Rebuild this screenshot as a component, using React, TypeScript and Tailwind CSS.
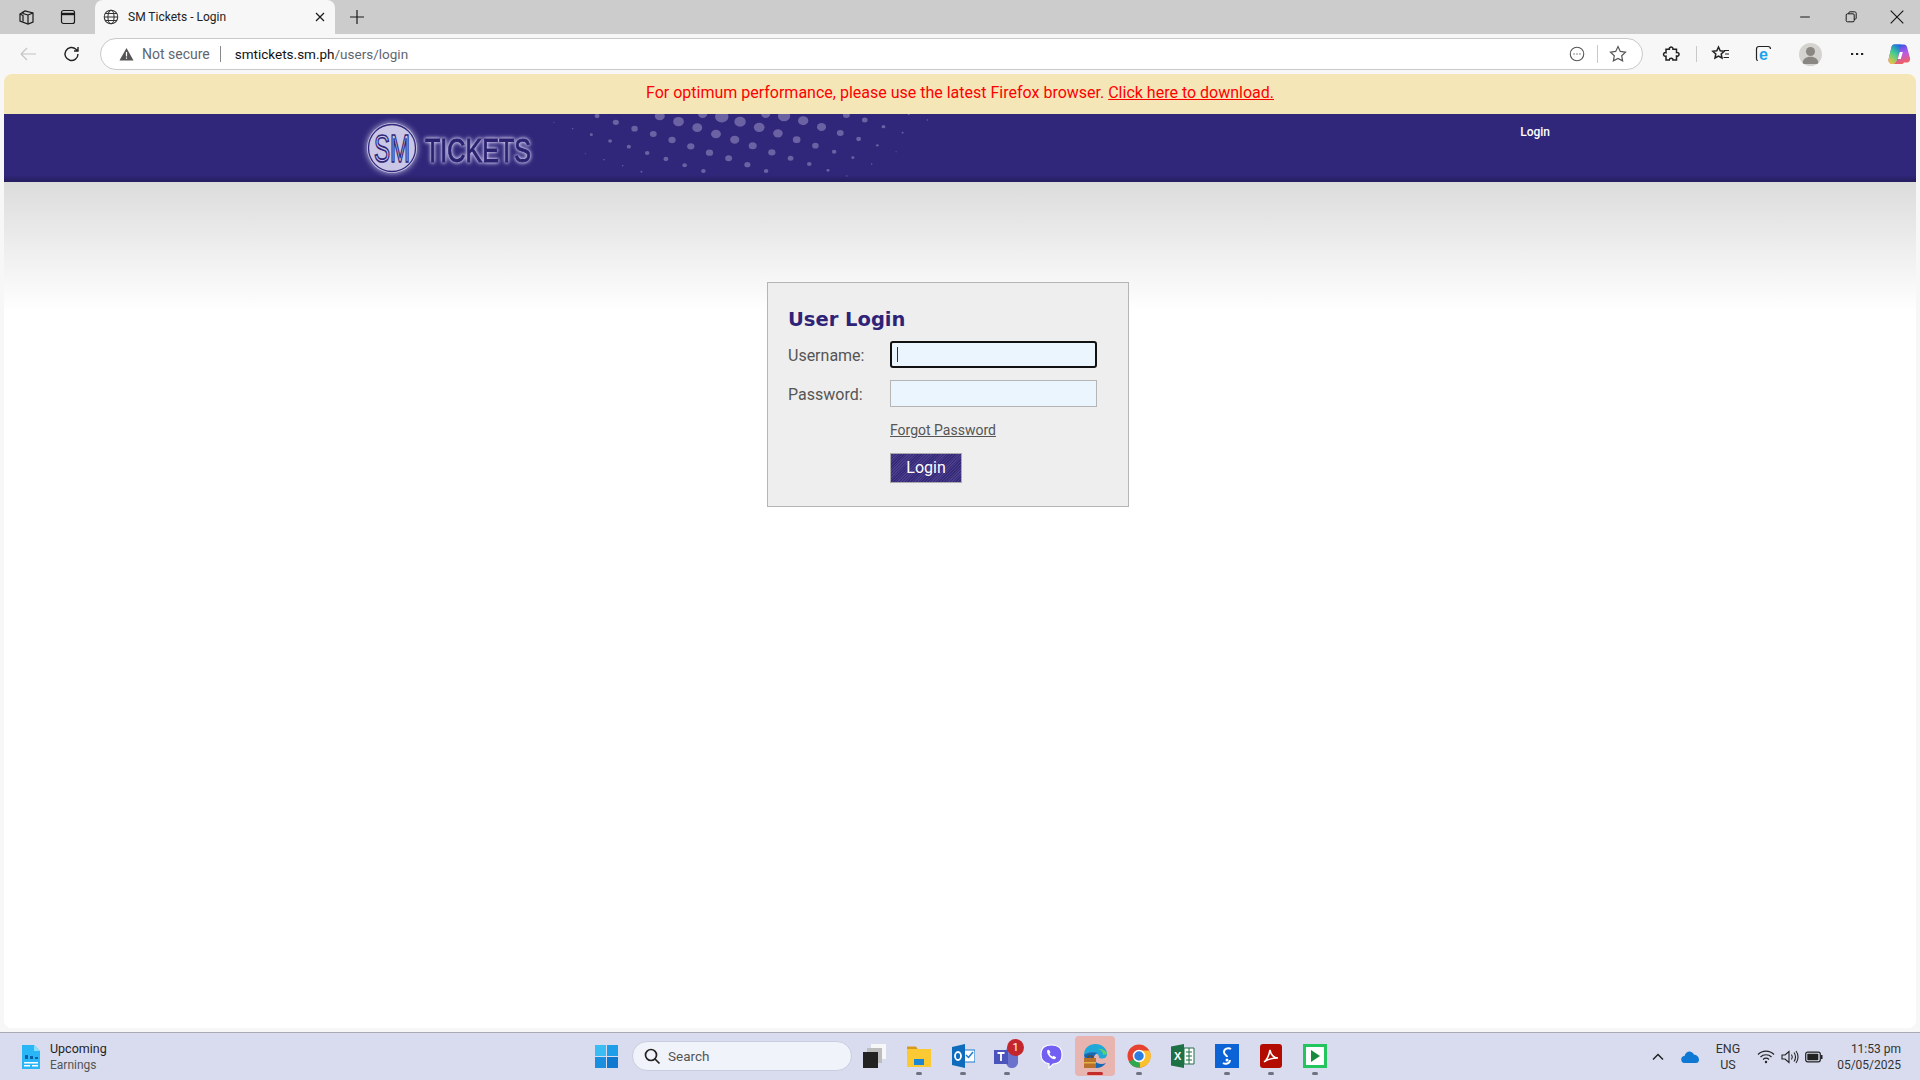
import { FC, ReactNode } from 'react';

// dots from the banner artwork: x, y, diameter (in banner crop units)
const BANNER_DOTS: [number, number, number][] = [
  [558, 52, 3], [607, 71, 4], [656, 89, 8], [705, 108, 10], [754, 125, 11], [802, 144, 12], [851, 162, 13], [900, 181, 12], [949, 198, 12],
  [640, 146, 3], [689, 164, 4], [738, 182, 4], [787, 200, 5],
  [671, 33, 13], [720, 52, 16], [769, 71, 17], [818, 87, 18], [867, 105, 19], [916, 124, 19], [965, 143, 19], [1015, 160, 18], [1064, 179, 16], [1113, 198, 12],
  [835, 33, 26], [884, 50, 28], [933, 68, 26], [982, 87, 26], [1031, 104, 24], [1078, 122, 21], [1128, 142, 19], [1177, 160, 15], [1226, 177, 12], [1275, 196, 8], [1324, 213, 4],
  [947, 27, 24], [997, 35, 35], [1045, 50, 30], [1095, 67, 28], [1144, 85, 25], [1193, 104, 20], [1242, 122, 17], [1291, 140, 12], [1340, 158, 8], [1389, 177, 4],
  [1112, 27, 24], [1160, 33, 32], [1210, 47, 27], [1258, 66, 24], [1307, 84, 18], [1355, 102, 13], [1404, 121, 7], [1453, 140, 3],
  [1323, 30, 18], [1371, 45, 15], [1420, 65, 10], [1470, 83, 5],
  [1486, 28, 5], [1535, 45, 4],
];

const Ico: FC<{ size?: number; children: ReactNode; className?: string }> = ({ size = 20, children, className }) => (
  <svg width={size} height={size} viewBox="0 0 20 20" fill="none" stroke="currentColor" strokeWidth="1.2" className={className}>
    {children}
  </svg>
);

const BrowserChrome = () => (
  <>
    <div className="flex h-[34px] items-end bg-[#cccccc] text-[#1a1a1a]">
      <div className="flex h-[34px] w-[52px] items-center justify-center pl-[1px]">
        <Ico>
          <path d="M3 7l5-3 8 2v9l-5 2-8-3z" />
          <path d="M11 8v9M11 8l5-2M11 8L6 6.5V4.8M3 7l3 1.5v6" />
        </Ico>
      </div>
      <div className="flex h-[34px] w-[32px] items-center justify-center">
        <Ico>
          <rect x="3.5" y="3.5" width="13" height="13" rx="2" />
          <path d="M3.5 7h13" strokeWidth="2.4" />
        </Ico>
      </div>
      <div className="ml-[11px] flex h-[34px] w-[240px] items-center rounded-t-[8px] bg-[#f7f7f7] pl-[6px]">
        <Ico size={18} className="ml-[1px] text-[#333]">
          <circle cx="10" cy="10" r="7.5" />
          <ellipse cx="10" cy="10" rx="3.4" ry="7.5" />
          <path d="M2.5 10h15M3.6 6.2h12.8M3.6 13.8h12.8" />
        </Ico>
        <span className="ml-[8px] text-[12px] text-[#222]">SM Tickets - Login</span>
        <Ico size={16} className="ml-auto mr-[7px]">
          <path d="M5 5l10 10M15 5L5 15" strokeWidth="1.5" />
        </Ico>
      </div>
      <div className="flex h-[34px] w-[44px] items-center justify-center">
        <Ico>
          <path d="M10 3v14M3 10h14" />
        </Ico>
      </div>
      <div className="ml-auto flex h-[34px] items-center text-[#111]">
        <div className="flex w-[46px] justify-center">
          <Ico size={16}><path d="M4 10h12" /></Ico>
        </div>
        <div className="flex w-[46px] justify-center">
          <Ico size={16}>
            <rect x="4" y="6" width="10" height="10" rx="1.5" />
            <path d="M7 6V5.300C7 4.300 7.800 3.500 8.800 3.500h5.700c1.200 0 2 .8 2 2v5.700c0 1-.7 1.800-2.500 1.800" />
          </Ico>
        </div>
        <div className="flex w-[46px] justify-center">
          <Ico size={18}><path d="M3 3l14 14M17 3L3 17" /></Ico>
        </div>
      </div>
    </div>

    <div className="flex h-[40px] items-center bg-[#f7f7f7] pl-[18px] text-[#222]">
      <Ico className="text-[#c4c4c4]">
        <path d="M3 10h15M3 10l6-6M3 10l6 6" />
      </Ico>
      <Ico className="ml-[24px]">
        <path d="M16 10a6.5 6.5 0 1 1-2-4.7L16 7M16 3v4h-4" strokeWidth="1.4" />
      </Ico>
      <div className="ml-[18px] flex h-[32px] w-[1543px] items-center rounded-full border border-[#c9c9c9] bg-white pl-[18px] pr-[14px]">
        <svg width="15" height="14" viewBox="0 0 15 14" className="text-[#555]">
          <path d="M7.5 1L14.5 13.5H.5z" fill="currentColor" />
          <path d="M7.5 5v4.4M7.5 10.6v1.2" stroke="#fff" strokeWidth="1.2" />
        </svg>
        <span className="ml-[8px] text-[14px] text-[#5f6670]">Not secure</span>
        <span className="ml-[10px] h-[16px] w-px bg-[#888]" />
        <span className="ml-[14px] text-[13.500px] text-[#111]">
          smtickets.sm.ph<span className="text-[#5f6670]">/users/login</span>
        </span>
        <Ico size={18} className="ml-auto text-[#555]">
          <circle cx="10" cy="10" r="7.5" />
          <path d="M6.2 10h1M9.5 10h1M12.8 10h1" strokeWidth="1.6" />
        </Ico>
        <span className="ml-[11px] h-[18px] w-px bg-[#c9c9c9]" />
        <Ico className="ml-[10px] text-[#555]">
          <path d="M10 2.6l2.3 4.8 5.2.7-3.8 3.6.9 5.2-4.6-2.5-4.6 2.5.9-5.2L2.5 8.1l5.2-.7z" />
        </Ico>
      </div>
      <Ico className="ml-[19px]">
        <path d="M8 3.5c1.6-1 3.200 0 3 1.700h3.500v3.300c1.800-.4 2.800 1 2.500 2.200-.3 1.300-1.500 1.700-2.500 1.300V16h-3.500c.3-2-3.500-2.400-3.700 0H4v-3.800c-1.800.4-2.700-1-2.400-2.200.3-1.200 1.400-1.600 2.400-1.300V5.200h3.200C7 4.600 7.300 3.900 8 3.500z" strokeWidth="1.5" />
      </Ico>
      <span className="ml-[14px] h-[16px] w-px bg-[#c9c9c9]" />
      <Ico className="ml-[14px]">
        <path d="M7.500 3l1.700 3.700 4 .5-3 2.800.8 4-3.500-2-3.500 2 .8-4-3-2.800 4-.5z" strokeWidth="1.5" />
        <path d="M13 6.500h5M14 10h4M12.500 13.500h5.500" strokeWidth="1.200" />
      </Ico>
      <svg width="20" height="20" viewBox="0 0 20 20" className="ml-[23px]">
        <path d="M4 16.500c-1 0-1.500-.6-1.500-1.500V5c0-1.500 1-2.500 2.500-2.500h9c1.500 0 2.500 1 2.500 2.500" fill="none" stroke="#222" strokeWidth="1.200" />
        <text x="5" y="16" fontSize="16" fontWeight="700" fill="#1aa3ec" fontFamily="Liberation Sans, sans-serif">e</text>
      </svg>
      <div className="ml-[25px] flex h-[23px] w-[23px] items-center justify-center overflow-hidden rounded-full bg-[#d5d3cf]">
        <svg width="23" height="23" viewBox="0 0 23 23">
          <circle cx="11.500" cy="8.500" r="4.500" fill="#8a8783" />
          <path d="M3.500 21c0-5 3.500-7.200 8-7.200s8 2.200 8 7.200z" fill="#8a8783" />
        </svg>
      </div>
      <svg width="20" height="20" viewBox="0 0 20 20" className="ml-[25px] text-[#222]">
        <path d="M4 10h2.200M9 10h2.200M14 10h2.200" stroke="currentColor" strokeWidth="1.800" />
      </svg>
      <svg width="24" height="24" viewBox="0 0 24 24" className="ml-[20px]">
        <defs>
          <linearGradient id="cpA" x1="0.7" y1="0" x2="0.2" y2="1">
            <stop offset="0" stopColor="#1f6fe0" />
            <stop offset=".45" stopColor="#3fcf8e" />
            <stop offset="1" stopColor="#f5c23c" />
          </linearGradient>
          <linearGradient id="cpB" x1="0.3" y1="0" x2="0.6" y2="1">
            <stop offset="0" stopColor="#2a4fe0" />
            <stop offset=".5" stopColor="#b65bea" />
            <stop offset="1" stopColor="#f4605a" />
          </linearGradient>
        </defs>
        <path d="M7 2.500h10c1.500 0 2.500 1 3 2.500l3 11c.6 2.500-1 4.500-3.300 4.500H17l-1.500 1.500H6c-3 0-5-2-4.500-4.500L4.500 5C5 3.500 5.800 2.500 7 2.500z" fill="url(#cpB)" />
        <path d="M7 2.500h7L10 18c-.5 2-2 4-4 4-3 0-5-2-4.500-4.500L4.500 5C5 3.500 5.800 2.500 7 2.500z" fill="url(#cpA)" />
        <path d="M12.800 10h3l-2 7h-3z" fill="#fff" />
      </svg>
    </div>
  </>
);

const SiteBanner = () => (
  <div className="relative flex h-[68px] items-start overflow-hidden bg-[#30277a]">
    <svg width="190" height="68" viewBox="0 0 190 68" className="ml-[348px] shrink-0 overflow-visible">
      <circle cx="40" cy="34" r="25" fill="#c9c6e6" className="[filter:drop-shadow(0_0_3px_#c9c6e6)]" />
      <circle cx="40" cy="34" r="23.500" fill="none" stroke="#30277a" strokeWidth="1.300" />
      <text x="22" y="48" fontSize="38" fontFamily="Liberation Sans, sans-serif" fill="#c9c6e6" stroke="#30277a" strokeWidth="1.700" textLength="36" lengthAdjust="spacingAndGlyphs">
        SM
      </text>
      <text x="73" y="48" fontSize="34" fontFamily="Liberation Sans, sans-serif" fill="#2a2170" stroke="#2a2170" strokeWidth=".9" textLength="106" lengthAdjust="spacingAndGlyphs" className="[filter:drop-shadow(0_0_1.500px_#dcd9f3)_drop-shadow(0_0_2px_#a9a4d8)]">
        TICKETS
      </text>
    </svg>
    <svg width="390" height="68" viewBox="540 27 1020 204" preserveAspectRatio="none" className="ml-[5px] shrink-0">
      {BANNER_DOTS.map(([x, y, d]) => (
        <circle key={`${x}-${y}`} cx={x} cy={y} r={d / 2} fill="#6a62a2" />
      ))}
    </svg>
    <a className="ml-auto mr-[366px] mt-[10px] text-[12px] font-medium leading-[16px] text-white">Login</a>
    <div className="absolute bottom-0 left-0 right-0 h-[7px] bg-gradient-to-b from-transparent to-[#251d5e]" />
  </div>
);

const LoginPanel = () => (
  <form className="ml-[763px] h-[225px] w-[362px] border border-[#b5b5b5] bg-[#eeeeee] pl-[16px] pt-[21px] text-[#555]">
    <h2 className="ml-[4px] h-[34px] text-[19.500px] font-bold leading-[32px] text-[#2f2378] [font-family:'DejaVu_Sans',sans-serif]">
      User Login
    </h2>
    <div className="mt-[3px] flex h-[27px] items-center">
      <label className="w-[106px] pl-[4px] pt-[2px] text-[16px]">Username:</label>
      <div className="relative">
        <input readOnly className="block h-[27px] w-[207px] rounded-[3px] border-2 border-[#111] bg-[#ebf5fd] outline-none" />
        <span className="absolute left-[7px] top-[6px] h-[15px] w-px bg-[#333]" />
      </div>
    </div>
    <div className="mt-[12px] flex h-[27px] items-center">
      <label className="w-[106px] pl-[4px] pt-[2px] text-[16px]">Password:</label>
      <input readOnly type="password" className="block h-[27px] w-[207px] border border-[#b5b5b5] bg-[#ebf5fd] outline-none" />
    </div>
    <a className="ml-[106px] mt-[13px] block h-[20px] text-[14px] leading-[20px] underline">Forgot Password</a>
    <button type="button" className="ml-[106px] mt-[13px] block h-[30px] w-[72px] border border-[#aaa] bg-[repeating-linear-gradient(135deg,#4a3d8c_0,#4a3d8c_1px,#352a78_1px,#352a78_2px)] text-[16px] text-white">
      Login
    </button>
  </form>
);

const AppTile: FC<{ children: ReactNode; pip?: boolean; active?: boolean; badge?: string }> = ({ children, pip, active, badge }) => (
  <div className={`relative flex h-[40px] items-center justify-center rounded-[4px] ${active ? 'mx-[2px] w-[40px] bg-[#e8b4b0]' : 'w-[44px]'}`}>
    {children}
    {badge && (
      <span className="absolute right-[5px] top-[3px] flex h-[17px] w-[17px] items-center justify-center rounded-full bg-[#c4262e] text-[11px] leading-none text-white">
        {badge}
      </span>
    )}
    {pip && <span className="absolute bottom-[1px] h-[3px] w-[6px] rounded-full bg-[#6f7280]" />}
    {active && <span className="absolute bottom-[1px] h-[3px] w-[16px] rounded-full bg-[#c42b2b]" />}
  </div>
);

const Taskbar = () => (
  <div className="relative flex h-[48px] items-center border-t border-[#aaaab4] bg-[#d8dcee] text-[#1f1f1f]">
    <svg width="18" height="24" viewBox="0 0 18 24" className="ml-[22px] shrink-0">
      <path d="M0 0h12l6 6v18H0z" fill="#29b6f6" />
      <path d="M12 0l6 6h-6z" fill="#8adcfb" />
      <path d="M3 14V10h3v4zM8 14v-3h3v3zM13 14v-2h3v2z" fill="#0b5ea8" />
      <path d="M2 17h14v1.500H2zM2 20h6v1.500H2zM10 20h6v1.500h-6z" fill="#fff" />
    </svg>
    <div className="ml-[10px] flex flex-col leading-[16px]">
      <span className="text-[12.500px]">Upcoming</span>
      <span className="text-[12px] text-[#555]">Earnings</span>
    </div>

    <div className="absolute left-[580px] top-[3px] flex h-[40px] items-center">
      <div className="flex w-[52px] items-center justify-center">
        <svg width="23" height="23" viewBox="0 0 23 23">
          <path d="M0 0h11v11H0z" fill="#3bbcf2" />
          <path d="M12 0h11v11H12z" fill="#1e9de8" />
          <path d="M0 12h11v11H0z" fill="#1a8fe0" />
          <path d="M12 12h11v11H12z" fill="#0f78cf" />
        </svg>
      </div>
      <div className="flex h-[30px] w-[220px] items-center rounded-full border border-[#c9cce0] bg-[#f1f3fa] pl-[10px]">
        <svg width="18" height="18" viewBox="0 0 18 18" fill="none" stroke="#222" strokeWidth="1.700">
          <circle cx="8" cy="8" r="5.500" />
          <path d="M12 12l4.500 4.500" />
        </svg>
        <span className="ml-[7px] text-[13.500px] text-[#555]">Search</span>
      </div>
      <div className="flex">
        <AppTile>
          <svg width="24" height="26" viewBox="0 0 24 26">
            <path d="M9 1h15v15H9z" fill="#f7f7f7" />
            <path d="M5 5h15v15H5z" fill="#bdbdbd" />
            <path d="M1 9h15v16H1z" fill="#222" />
          </svg>
        </AppTile>
        <div className="w-[1px]" />
        <AppTile pip>
          <svg width="24" height="22" viewBox="0 0 24 22">
            <path d="M0 1.500h9l2 3h-11z" fill="#d99a1c" />
            <path d="M0 4h24v18H0z" fill="#fbc933" />
            <path d="M7 14h10v6H7z" fill="#1c86d4" />
          </svg>
        </AppTile>
        <AppTile pip>
          <svg width="24" height="24" viewBox="0 0 24 24">
            <path d="M12 6h12v12H12z" fill="#fff" stroke="#1f7ad0" strokeWidth="1.200" />
            <path d="M15 11l2.500 2.500L22 8" fill="none" stroke="#1f7ad0" strokeWidth="1.500" />
            <path d="M1 3l13-3v24L1 21z" fill="#0f6cbd" />
            <ellipse cx="7" cy="12" rx="3" ry="4" fill="none" stroke="#fff" strokeWidth="1.800" />
          </svg>
        </AppTile>
        <AppTile pip badge="1">
          <svg width="26" height="24" viewBox="0 0 26 24">
            <circle cx="17" cy="7" r="5" fill="#7b83d6" />
            <path d="M10 10h14v7a6 6 0 0 1-12 2h-2z" fill="#6a72cc" />
            <path d="M0 6h14v14H0z" fill="#4b53bc" />
            <path d="M3.500 9h7M7 9v8" stroke="#fff" strokeWidth="1.800" />
          </svg>
        </AppTile>
        <AppTile>
          <svg width="23" height="25" viewBox="0 0 23 25">
            <path d="M11.500 1C17.500 1 22 3 22 10.500S18 20 13 20l-4 4v-4.200C3.500 19 1 16 1 10.500 1 3 5.500 1 11.500 1z" fill="#7360f2" stroke="#fff" strokeWidth="1.200" />
            <path d="M7 6.500l2-.8 1.500 2.800-1 1c.5 1.500 1.500 2.500 3 3.200l1-1 2.600 1.600-.8 1.800c-3.500.8-8.500-4-8.300-8.600z" fill="#fff" />
          </svg>
        </AppTile>
        <AppTile active>
          <svg width="25" height="26" viewBox="0 0 25 26">
            <path d="M1 12C1 5 6 1 12.500 1 19 1 24 5.500 24 11c0 3-2 4.500-5 4.500-2 0-3-.5-3-1.500 0-5-11-6-15-2z" fill="#1fa8d8" />
            <path d="M24 11c0-2-4-6-9-5 4 1 5 4 5 6z" fill="#5bd16f" />
            <path d="M1 12c1 8 7 13 12 13 4 0 8-2 10-5-4 2-9 1-11-2-2-3-1-7 3-8-6-2-13 0-14 2z" fill="#1269b8" />
            <path d="M1 15h12v10H1z" fill="#b9702a" />
            <path d="M1 19h12v1.500H1z" fill="#e5b04a" />
            <path d="M5 15v-2h4v2" fill="none" stroke="#6b3f15" strokeWidth="1.200" />
          </svg>
        </AppTile>
        <AppTile pip>
          <svg width="24" height="24" viewBox="0 0 24 24">
            <circle cx="12" cy="12" r="11.500" fill="#e5432f" />
            <path d="M12 12L2 18a11.500 11.500 0 0 0 11 5.500z" fill="#2fa84f" />
            <path d="M12 6.500h10.500a11.500 11.500 0 0 1-9.500 17z" fill="#fbc02d" />
            <circle cx="12" cy="12" r="5.500" fill="#2a7de1" stroke="#fff" strokeWidth="1.500" />
          </svg>
        </AppTile>
        <AppTile>
          <svg width="24" height="24" viewBox="0 0 24 24">
            <path d="M13 4h10v16H13z" fill="#fff" stroke="#1e7145" strokeWidth="1" />
            <path d="M15 8h6M15 12h6M15 16h6M18 4v16" stroke="#1e7145" strokeWidth="1" />
            <path d="M0 2.500L13 0v24L0 21.500z" fill="#1e7145" />
            <text x="3" y="16" fontSize="11" fontWeight="700" fill="#fff" fontFamily="Liberation Sans, sans-serif">X</text>
          </svg>
        </AppTile>
        <AppTile pip>
          <svg width="24" height="24" viewBox="0 0 24 24">
            <path d="M0 0h24v24H0z" fill="#0b63d6" />
            <path d="M16 5c-3-2-7 0-7 3s3 3 3 5M8 19c3 2 7 0 7-3" fill="none" stroke="#fff" strokeWidth="2" />
            <circle cx="12" cy="16" r="1.500" fill="#fff" />
          </svg>
        </AppTile>
        <AppTile pip>
          <svg width="22" height="24" viewBox="0 0 22 24">
            <rect width="22" height="24" rx="3" fill="#b30b00" />
            <path d="M4 18c3-2 5-7 6-12 1 5 3 8 8 8-5 0-10 1-14 4z" fill="none" stroke="#fff" strokeWidth="1.500" />
          </svg>
        </AppTile>
        <AppTile pip>
          <svg width="24" height="24" viewBox="0 0 24 24">
            <rect width="24" height="24" fill="#22c55e" />
            <rect x="3" y="3" width="18" height="18" fill="#fff" />
            <path d="M8 6l9 6-9 6z" fill="#178a3e" />
          </svg>
        </AppTile>
      </div>
    </div>

    <div className="ml-auto mr-[19px] flex items-center">
      <svg width="14" height="14" viewBox="0 0 14 14" fill="none" stroke="#222" strokeWidth="1.500">
        <path d="M2 9.500L7 4.500l5 5" />
      </svg>
      <svg width="18" height="12" viewBox="0 0 18 12" className="ml-[16px]">
        <path d="M4 12a3.500 3.500 0 0 1-.5-7C4.500 2 7 0 9.500 .8c2 .5 3 1.500 3.500 3 2.500 0 5 2 5 5 0 2-1 3.200-3 3.200z" fill="#0f78d4" />
      </svg>
      <div className="ml-[9px] flex w-[40px] flex-col items-center text-[12.500px] leading-[16px] text-[#333]">
        <span>ENG</span>
        <span>US</span>
      </div>
      <svg width="18" height="16" viewBox="0 0 18 16" fill="none" stroke="#222" strokeWidth="1.200" className="ml-[9px]">
        <path d="M1 5.500c4.500-4.500 11.500-4.500 16 0M3.500 8c3-3 8-3 11 0M6 10.500c1.700-1.500 4.300-1.500 6 0" />
        <circle cx="9" cy="13" r="1.200" fill="#222" stroke="none" />
      </svg>
      <svg width="18" height="16" viewBox="0 0 18 16" fill="none" stroke="#222" strokeWidth="1.100" className="ml-[6px]">
        <path d="M1 6h3l4-3.500v11L4 10H1z" />
        <path d="M10.500 5.500c1 1.500 1 3.500 0 5M13 3.500c2 2.500 2 6.500 0 9M15 2c2.700 3.500 2.700 8.500 0 12" />
      </svg>
      <svg width="18" height="12" viewBox="0 0 18 12" className="ml-[6px]">
        <rect x=".7" y="1.200" width="14.600" height="9.600" rx="2" fill="none" stroke="#222" strokeWidth="1.200" />
        <rect x="2.300" y="2.800" width="11" height="6.400" rx=".8" fill="#222" />
        <path d="M16 4h1.500v4H16z" fill="#222" />
      </svg>
      <div className="ml-[14px] flex w-[64px] flex-col items-end text-[12px] leading-[16px] text-[#333]">
        <span>11:53 pm</span>
        <span>05/05/2025</span>
      </div>
    </div>
  </div>
);

export default function App() {
  return (
    <div className="flex h-screen w-screen flex-col overflow-hidden bg-[#f7f7f7] [font-family:'Roboto',sans-serif]">
      <BrowserChrome />
      <div className="mx-[4px] flex h-[954px] flex-col overflow-hidden rounded-[8px] bg-white">
        <div className="flex h-[40px] items-center justify-center bg-[#f5e6b8] pb-[3px] text-[16px] text-[#f00]">
          <span>
            For optimum performance, please use the latest Firefox browser. <a className="underline">Click here to download.</a>
          </span>
        </div>
        <SiteBanner />
        <div className="flex-1 bg-[linear-gradient(#dcdcdc,#ffffff_130px)] pt-[100px]">
          <LoginPanel />
        </div>
      </div>
      <div className="mt-auto">
        <Taskbar />
      </div>
    </div>
  );
}
